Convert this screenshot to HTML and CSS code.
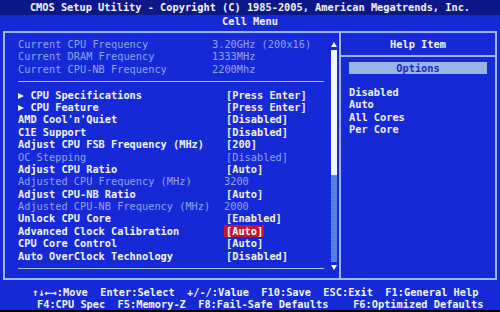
FILE: index.html
```html
<!DOCTYPE html>
<html>
<head>
<meta charset="utf-8">
<link rel="stylesheet" href="styles.css">
</head>
<body>
<div class="screen">
  <div class="titlebar">CMOS Setup Utility - Copyright (C) 1985-2005, American Megatrends, Inc.</div>
  <div class="subtitle">Cell Menu</div>
  <div class="frame">
    <div class="left">
      <div class="main">
        <div class="info">
          <div class="irow"><span>Current CPU Frequency</span><span>3.20GHz (200x16)</span></div>
          <div class="irow"><span>Current DRAM Frequency</span><span>1333MHz</span></div>
          <div class="irow"><span>Current CPU-NB Frequency</span><span>2200Mhz</span></div>
        </div>
        <div class="sep"></div>
        <div class="items">
          <div class="row"><span class="lbl"><span class="tri"></span> CPU Specifications</span><span class="val">[Press Enter]</span></div>
          <div class="row"><span class="lbl"><span class="tri"></span> CPU Feature</span><span class="val">[Press Enter]</span></div>
          <div class="row"><span class="lbl">AMD Cool'n'Quiet</span><span class="val">[Disabled]</span></div>
          <div class="row"><span class="lbl">C1E Support</span><span class="val">[Disabled]</span></div>
          <div class="row"><span class="lbl">Adjust CPU FSB Frequency (MHz)</span><span class="val">[200]</span></div>
          <div class="row dim"><span class="lbl">OC Stepping</span><span class="val">[Disabled]</span></div>
          <div class="row"><span class="lbl">Adjust CPU Ratio</span><span class="val">[Auto]</span></div>
          <div class="row dim"><span class="lbl">Adjusted CPU Frequency (MHz)</span><span class="val num">3200</span></div>
          <div class="row"><span class="lbl">Adjust CPU-NB Ratio</span><span class="val">[Auto]</span></div>
          <div class="row dim"><span class="lbl">Adjusted CPU-NB Frequency (MHz)</span><span class="val num">2000</span></div>
          <div class="row"><span class="lbl">Unlock CPU Core</span><span class="val">[Enabled]</span></div>
          <div class="row"><span class="lbl">Advanced Clock Calibration</span><span class="val"><span class="sel">[Auto]</span></span></div>
          <div class="row"><span class="lbl">CPU Core Control</span><span class="val">[Auto]</span></div>
          <div class="row"><span class="lbl">Auto OverClock Technology</span><span class="val">[Disabled]</span></div>
        </div>
        <div class="sep bottom"></div>
      </div>
      <div class="scroll">
        <div class="arrow up"></div>
        <div class="thumb"></div>
        <div class="track"></div>
        <div class="arrow down"></div>
      </div>
    </div>
    <div class="right">
      <div class="helphead">Help Item</div>
      <div class="options">Options</div>
      <div class="helplist">
        <div>Disabled</div>
        <div>Auto</div>
        <div>All Cores</div>
        <div>Per Core</div>
      </div>
    </div>
  </div>
  <div class="footer">
    <div class="fline l1">&#8593;&#8595;&#8592;&#8594;:Move  Enter:Select  +/-/:Value  F10:Save  ESC:Exit  F1:General Help</div>
    <div class="fline l2">F4:CPU Spec  F5:Memory-Z  F8:Fail-Safe Defaults    F6:Optimized Defaults</div>
  </div>
  <div class="blackstrip"></div>
</div>
</body>
</html>
```

FILE: styles.css
```css
* { box-sizing: border-box; }
html, body { margin: 0; padding: 0; }
body {
  width: 500px;
  height: 312px;
  overflow: hidden;
  background: #1629d6;
  font-family: "DejaVu Sans Mono", "Liberation Mono", monospace;
  font-size: 10.3px;
  font-weight: bold;
  color: #eef0ff;
}
.screen {
  width: 500px;
  height: 312px;
  display: flex;
  flex-direction: column;
}
.titlebar {
  height: 15px;
  line-height: 15px;
  background: #0c1788;
  text-align: center;
  color: #f4f4ff;
  white-space: pre;
}
.subtitle {
  height: 16px;
  line-height: 12px;
  text-align: center;
  color: #f4f4ff;
}
.frame {
  margin: 0 3px;
  height: 249px;
  border: 2px solid #9fb6f2;
  display: grid;
  grid-template-columns: 334px 1fr;
}
.left {
  display: flex;
  padding-left: 13px;
}
.main {
  flex: 1;
  padding-top: 5px;
}
.irow {
  display: grid;
  grid-template-columns: 194px auto;
  height: 12.4px;
  line-height: 12.4px;
  color: #8ea4ea;
  font-weight: normal;
  white-space: pre;
}
.sep {
  height: 1px;
  background: #a6bcf4;
  margin: 6px 0 6.4px;
  width: 306px;
}
.sep.bottom { margin-top: 5.6px; }
.row {
  display: grid;
  grid-template-columns: 208px auto;
  height: 12.4px;
  line-height: 12.4px;
  white-space: pre;
}
.row .lbl { color: #f2f4ff; }
.row .val { color: #f4f2dc; }
.tri {
  display: inline-block;
  width: 0;
  height: 0;
  border-top: 3.5px solid transparent;
  border-bottom: 3.5px solid transparent;
  border-left: 6px solid #f2f4ff;
  margin-right: 0.2px;
  vertical-align: -0.5px;
}
.row.dim .lbl, .row.dim .val { color: #8ea4ea; font-weight: normal; }
.row .val.num { margin-left: -2px; }
.sel {
  background: #c8142c;
  color: #ffffff;
  padding: 0 1px 0 2px;
  margin-left: -2px;
}
.scroll {
  width: 7px;
  margin-right: 2px;
  padding-top: 9px;
  display: flex;
  flex-direction: column;
  align-items: center;
}
.arrow {
  width: 0;
  height: 0;
  border-left: 3px solid transparent;
  border-right: 3px solid transparent;
}
.arrow.up { border-bottom: 5px solid #ffffff; margin-bottom: 3px; }
.arrow.down { border-top: 5px solid #ffffff; margin-top: 3px; }
.thumb {
  width: 6px;
  height: 125px;
  background: #f4f6ff;
}
.track {
  width: 6px;
  height: 87px;
  background: repeating-linear-gradient(180deg, #5f86e6 0 1px, #4e76e0 1px 2px);
}
.right {
  border-left: 2px solid #9fb6f2;
  display: flex;
  flex-direction: column;
}
.helphead {
  height: 24px;
  line-height: 22px;
  text-align: center;
  border-bottom: 2px solid #9fb6f2;
  color: #f2f4ff;
}
.options {
  margin: 5px 8px 0;
  height: 12px;
  line-height: 12px;
  background: #9ab4ea;
  color: #1a2bb8;
  text-align: center;
}
.helplist {
  margin-top: 12px;
  padding-left: 8px;
}
.helplist div {
  height: 12.4px;
  line-height: 12.4px;
}
.footer {
  padding-top: 6px;
  height: 30px;
}
.fline {
  height: 12.2px;
  line-height: 12.2px;
  white-space: pre;
  color: #f2f4ff;
}
.l1 { padding-left: 32px; }
.l2 { padding-left: 37px; }
.blackstrip {
  flex: 1;
  background: #000000;
}
```
